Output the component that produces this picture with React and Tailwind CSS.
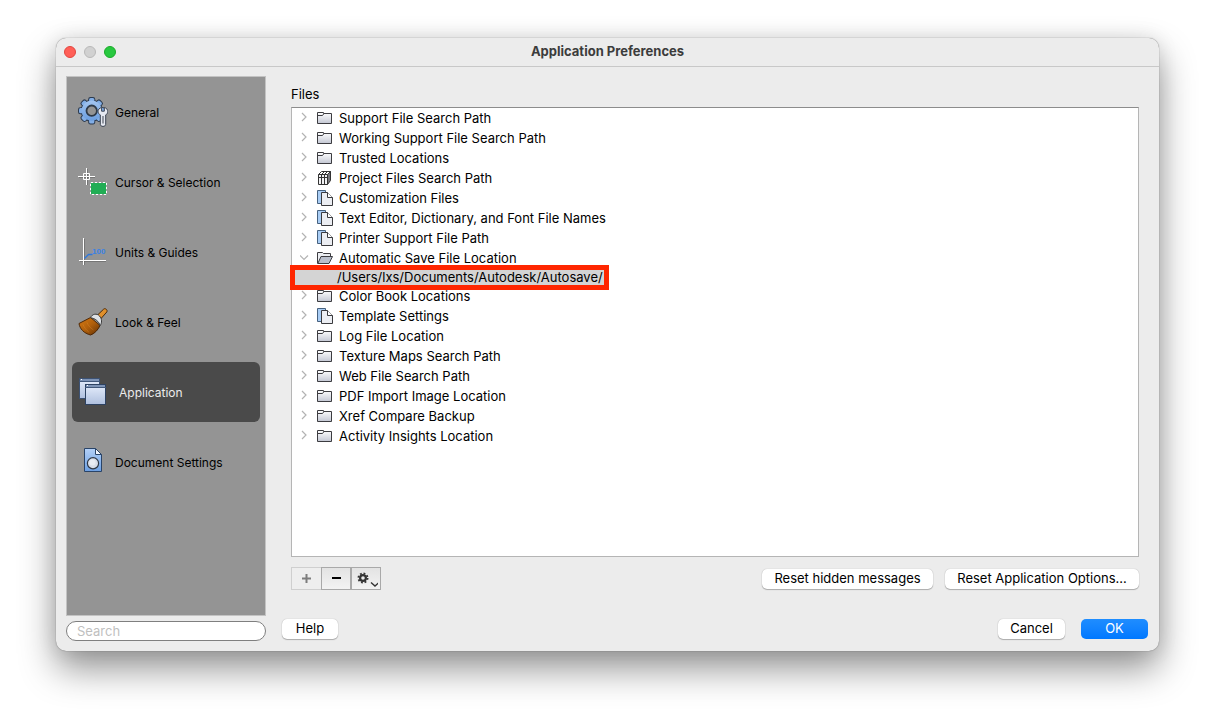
import React, { useState } from 'react';

const CATEGORIES = [
  { label: 'General', icon: GeneralIcon },
  { label: 'Cursor & Selection', icon: CursorIcon },
  { label: 'Units & Guides', icon: UnitsIcon },
  { label: 'Look & Feel', icon: BrushIcon },
  { label: 'Application', icon: WindowsIcon },
  { label: 'Document Settings', icon: DocumentIcon },
];

const FILES = [
  { label: 'Support File Search Path', icon: FolderIcon },
  { label: 'Working Support File Search Path', icon: FolderIcon },
  { label: 'Trusted Locations', icon: FolderIcon },
  { label: 'Project Files Search Path', icon: BinderIcon },
  { label: 'Customization Files', icon: PagesIcon },
  { label: 'Text Editor, Dictionary, and Font File Names', icon: PagesIcon },
  { label: 'Printer Support File Path', icon: PagesIcon },
  { label: 'Automatic Save File Location', icon: OpenFolderIcon, path: '/Users/lxs/Documents/Autodesk/Autosave/' },
  { label: 'Color Book Locations', icon: FolderIcon },
  { label: 'Template Settings', icon: PagesIcon },
  { label: 'Log File Location', icon: FolderIcon },
  { label: 'Texture Maps Search Path', icon: FolderIcon },
  { label: 'Web File Search Path', icon: FolderIcon },
  { label: 'PDF Import Image Location', icon: FolderIcon },
  { label: 'Xref Compare Backup', icon: FolderIcon },
  { label: 'Activity Insights Location', icon: FolderIcon },
];

/* Sidebar icons, 30x30 */

function GeneralIcon() {
  const teeth = [0, 45, 90, 135, 180, 225, 270, 315];
  return (
    <svg width="30" height="30" viewBox="0 0 30 30" className="shrink-0">
      <defs>
        <linearGradient id="gear" x1="0" y1="0" x2="0" y2="1">
          <stop offset="0" stopColor="#a3c5f0" />
          <stop offset="1" stopColor="#6a9ddf" />
        </linearGradient>
      </defs>
      <g fill="#2c3b50">
        <circle cx="13.7" cy="13.7" r="11" />
        {teeth.map(a => (
          <rect key={a} x="10.2" y="0" width="7" height="8" rx="2.2" transform={`rotate(${a} 13.7 13.7)`} />
        ))}
      </g>
      <g fill="#82aee6">
        {teeth.map(a => (
          <rect key={a} x="11.1" y="1" width="5.2" height="8" rx="1.5" transform={`rotate(${a} 13.7 13.7)`} />
        ))}
      </g>
      <circle cx="13.7" cy="13.7" r="10.1" fill="url(#gear)" />
      <circle cx="13.7" cy="13.7" r="5.2" fill="#949494" stroke="#2f3a48" strokeWidth="1.8" />
      <path
        d="M23.6 10.5c-2.4.5-3.7 2.300-3.500 4.300.2 1.500 1 2.500 2.200 3.100v9.400c0 2.800 5.400 2.800 5.400 0v-9.400c1.200-.6 2-1.700 2.100-3.100.1-2-1.200-3.800-3.500-4.300v3.700h-2.700z"
        fill="#e6e9f1" stroke="#3d4553" strokeWidth="1"
      />
      <path d="M25 19v7.5" stroke="#59606c" strokeWidth="1.2" />
    </svg>
  );
}

function CursorIcon() {
  return (
    <svg width="30" height="30" viewBox="0 0 30 30" fill="none" className="shrink-0">
      <path d="M1 10.5h16M9.5 2v16" stroke="#555" strokeOpacity=".5" />
      <path d="M0 9.5h17M8.5 1v17M5.5 6.5h6v6h-6z" stroke="#fff" />
      <rect x="12.5" y="15.5" width="16" height="12" fill="#22ad55" stroke="#3c4a40" />
      <rect x="12.5" y="15.5" width="16" height="12" stroke="#fff" strokeDasharray="3 1" />
    </svg>
  );
}

function UnitsIcon() {
  return (
    <svg width="30" height="30" viewBox="0 0 30 30" fill="none" className="shrink-0">
      <path d="M6.5 2v26M2 24.5h26" stroke="#555" strokeOpacity=".5" />
      <path d="M5.5 1v27M1 23.5h27" stroke="#fff" />
      <path d="M6.5 21.5l4-4h4" stroke="#2f78dc" strokeWidth="1.4" />
      <text x="14" y="17" fontSize="8" fontWeight="bold" fill="#3a82e6" fontFamily="Liberation Sans, sans-serif">100</text>
    </svg>
  );
}

function BrushIcon() {
  return (
    <svg width="30" height="30" viewBox="0 0 30 30" strokeLinejoin="round" className="shrink-0">
      <defs>
        <linearGradient id="bristle" x1="0" y1="0" x2="1" y2="1">
          <stop offset="0" stopColor="#d87b12" />
          <stop offset=".5" stopColor="#b05f0b" />
          <stop offset="1" stopColor="#5e2f05" />
        </linearGradient>
      </defs>
      <path d="M19 8.5L25.6 2.200c1.600-1.500 4.400.8 3.200 2.800L22.600 12z" fill="#e0902c" stroke="#4a2b0c" />
      <path d="M12.6 10.5L1 16.500c.6 5 5 10 11.600 11.500 4.500-1.600 8-6 9.400-9.600z" fill="url(#bristle)" stroke="#4d2706" />
      <path d="M5 17.500c1.200 3 3.200 5.600 5.800 7.500M9 15.500c1.200 3 3.500 5.600 6.500 7.500" stroke="#e8973a" strokeWidth=".8" fill="none" opacity=".4" />
      <path d="M12.500 10.800C14 6.800 19 6 21.500 9c2.600 2.800 2.600 7 .6 9.600-1.200-4.200-5-7.300-9.600-7.800z" fill="#dfe2e6" stroke="#3b3b3b" />
    </svg>
  );
}

function WindowsIcon() {
  return (
    <svg width="30" height="30" viewBox="0 0 30 30" className="shrink-0">
      <defs>
        <linearGradient id="pane" x1="0" y1="0" x2="0" y2="1">
          <stop offset="0" stopColor="#e6eefc" />
          <stop offset="1" stopColor="#afc0df" />
        </linearGradient>
      </defs>
      <rect x="1.5" y="1.5" width="20" height="20" fill="url(#pane)" stroke="#3d5273" />
      <rect x="2" y="2" width="19" height="2" fill="#7d93b6" />
      <path d="M1 4.5h21" stroke="#41587b" />
      <rect x="3" y="2" width="1" height="1" fill="#fff" />
      <rect x="7.5" y="7.5" width="20" height="20" fill="url(#pane)" stroke="#2d4262" />
      <rect x="8" y="8" width="19" height="2" fill="#7d93b6" />
      <path d="M7 10.5h21" stroke="#41587b" />
      <rect x="9" y="8" width="1" height="1" fill="#fff" />
    </svg>
  );
}

function DocumentIcon() {
  return (
    <svg width="30" height="30" viewBox="0 0 30 30" strokeLinejoin="round" className="shrink-0">
      <defs>
        <linearGradient id="doc" x1="0" y1="0" x2="0" y2="1">
          <stop offset="0" stopColor="#b4d1f8" />
          <stop offset="1" stopColor="#6c9fe2" />
        </linearGradient>
      </defs>
      <path d="M6.5 1.5h11l6 6v17h-17z" fill="url(#doc)" stroke="#2a4468" />
      <path d="M17.5 1.500v6h6z" fill="#f2f7ff" stroke="#2a4468" />
      <circle cx="15" cy="16.3" r="5.6" fill="#d9dee8" stroke="#2e3744" strokeWidth="1.200" />
      <circle cx="14.5" cy="15.5" r="3" fill="#e9ecf2" />
    </svg>
  );
}

/* Tree icons, 16x16 */

function FolderIcon() {
  return (
    <svg width="16" height="16" viewBox="0 0 16 16" className="shrink-0">
      <defs>
        <linearGradient id="folder" x1="0" y1="0" x2="0" y2="1">
          <stop offset="0" stopColor="#fff" />
          <stop offset="1" stopColor="#c3c7d3" />
        </linearGradient>
      </defs>
      <path d="M.5 2.5h6v1h8v10H.5z" fill="url(#folder)" stroke="#3c3c40" />
      <path d="M1 5.500h4.500l1.500-2" stroke="#3c3c40" fill="none" />
    </svg>
  );
}

function OpenFolderIcon() {
  return (
    <svg width="16" height="16" viewBox="0 0 16 16" strokeLinejoin="round" className="shrink-0">
      <path d="M.5 13.500v-11h5l1 1h7v3" fill="#eceef2" stroke="#3c3c40" />
      <path d="M.8 13.500l3.200-7h11.500l-3.500 7z" fill="#b9bfcc" stroke="#3c3c40" />
    </svg>
  );
}

function BinderIcon() {
  return (
    <svg width="16" height="16" viewBox="0 0 16 16" strokeLinejoin="round" className="shrink-0">
      <path d="M1.500 4.500l3-3h9l-3 3z" fill="#fff" stroke="#333" />
      <path d="M10.500 4.500l3-3v9l-3 4z" fill="#77777c" stroke="#333" />
      <path d="M1.500 4.500h9v10h-9z" fill="#f3f3f5" stroke="#333" />
      <path d="M4.500 4.500v10M7.500 4.500v10M4.500 4.500l3-3M7.500 4.500l3-3M1.500 7.500h9" stroke="#333" fill="none" />
    </svg>
  );
}

function PagesIcon() {
  return (
    <svg width="16" height="16" viewBox="0 0 16 16" className="shrink-0">
      <path d="M.5 .5h8v13h-8z" fill="#a9cdf5" stroke="#46617f" />
      <path d="M4.5 2.500h6l5 5v8h-11z" fill="#eceef3" stroke="#3a3a3e" />
      <path d="M10.500 2.500v5h5" fill="#fff" stroke="#3a3a3e" />
    </svg>
  );
}

function Chevron({ open }) {
  return (
    <svg width="10" height="10" viewBox="0 0 10 10" fill="none" stroke="#b3b3b3" strokeWidth="1.200" className="shrink-0 mb-0.5">
      {open ? <path d="M0 3.500l4 4 4-4" /> : <path d="M2 1l4 4-4 4" />}
    </svg>
  );
}

function GearMenuIcon() {
  return (
    <svg width="24" height="18" viewBox="0 0 24 18" fill="none">
      <circle cx="9" cy="8" r="2.900" stroke="#333" strokeWidth="2.200" />
      <circle cx="9" cy="8" r="4.600" stroke="#333" strokeWidth="1.800" strokeDasharray="1.800 1.810" />
      <path d="M17 12.500l4 3.500 4-3.500" stroke="#333" strokeWidth="1.400" />
    </svg>
  );
}

function PushButton({ className, children }) {
  return (
    <button
      type="button"
      className={`h-5 rounded-[5px] bg-white text-[13px] leading-4 pb-0.5 text-black shadow-[0_0_1px_rgba(0,0,0,0.3),0_1px_1px_rgba(0,0,0,0.25)] ${className}`}
    >
      {children}
    </button>
  );
}

export default function App() {
  const [active, setActive] = useState('Application');
  const [query, setQuery]   = useState('');

  return (
    <div className="min-h-screen bg-white px-14 pt-[38px] pb-[74px] flex flex-col font-['Inter',sans-serif] text-[13px] text-black">
      <div className="flex-1 flex flex-col rounded-[10px] bg-[#ececec] shadow-[0_0_1px_rgba(0,0,0,0.6),0_18px_36px_rgba(0,0,0,0.42),0_0_20px_rgba(0,0,0,0.1)]">

        {/* Title bar */}
        <header className="h-[29px] grid grid-cols-[1fr_auto_1fr] items-center px-2 border-b border-[#c8c8c8]">
          <div className="flex gap-2">
            <button type="button" aria-label="Close" className="w-3 h-3 rounded-full bg-[#ff5f57] border border-[#e2463f]" />
            <button type="button" aria-label="Minimize" className="w-3 h-3 rounded-full bg-[#d1d1d1] border border-[#b9b9b9]" />
            <button type="button" aria-label="Zoom" className="w-3 h-3 rounded-full bg-[#28c840] border border-[#1aab29]" />
          </div>
          <h1 className="font-bold text-[#3c3c3c]">Application Preferences</h1>
        </header>

        <div className="flex-1 flex pt-[9px] pl-[10px] pr-[11px] pb-[10px]">

          {/* Sidebar */}
          <aside className="w-[200px] shrink-0 flex flex-col gap-[5px]">
            <nav className="flex-1 flex flex-col gap-[10px] p-[5px] bg-[#949494] border border-[#c3c3c3]">
              {CATEGORIES.map(({ label, icon: Icon }) => (
                <button
                  key={label}
                  type="button"
                  onClick={() => setActive(label)}
                  className={`h-[60px] flex items-center pl-1.5 rounded-md text-[12px] text-left ${
                    active === label ? 'gap-[11px] bg-[#4a4a4a] text-[#ececec]' : 'gap-[7px] text-black'
                  }`}
                >
                  <Icon />
                  <span className="pt-0.5">{label}</span>
                </button>
              ))}
            </nav>
            <input
              type="search" aria-label="Search" placeholder="Search"
              value={query} onChange={e => setQuery(e.target.value)}
              className="h-5 w-full rounded-full bg-white border border-[#7f7f7f] px-[10px] text-[13px] outline-none placeholder:text-[#bfbfbf]"
            />
          </aside>

          {/* Files pane */}
          <main className="flex-1 flex flex-col ml-[15px]">
            <section className="flex-1 flex flex-col pl-[10px] pr-[9px]">
              <h2 className="mt-[10px] mb-[5px] leading-4">Files</h2>
              <ul className="flex-1 bg-white border border-[#b5b5b5] border-t-[#8c8c8c]">
                {FILES.map(({ label, icon: Icon, path }) => (
                  <li key={label}>
                    <div className="h-5 flex items-center pl-2">
                      <Chevron open={!!path} />
                      <span className="w-[29px] pl-[7px]"><Icon /></span>
                      <span className="pt-0.5">{label}</span>
                    </div>
                    {path && (
                      <div className="relative h-[18px] w-[315px] pl-[45px] leading-[18px] bg-[#d4d4d4]">
                        {path}
                        <span className="absolute -top-[3px] -bottom-1 -left-0.5 -right-0.5 border-[5px] border-[#ff2600]" />
                      </div>
                    )}
                  </li>
                ))}
              </ul>

              <div className="mt-[10px] flex items-center justify-between">
                <div className="flex h-[23px]">
                  <button type="button" disabled aria-label="Add" className="w-[30px] flex items-center justify-center border border-[#cfcfcf] border-r-0 bg-[#eeeeee]">
                    <svg width="9" height="9" viewBox="0 0 9 9"><path d="M4.500 0v9M0 4.500h9" stroke="#7d7d7d" strokeWidth="2" /></svg>
                  </button>
                  <button type="button" aria-label="Remove" className="w-[30px] flex items-center justify-center border border-[#a9a9a9] bg-linear-to-b from-[#e3e3e3] to-[#f3f3f3]">
                    <svg width="9" height="9" viewBox="0 0 9 9"><path d="M0 4h9" stroke="#000" strokeWidth="2" /></svg>
                  </button>
                  <button type="button" aria-label="Actions" className="w-[30px] flex items-center justify-center border border-[#a9a9a9] bg-linear-to-b from-[#e3e3e3] to-[#f3f3f3]">
                    <GearMenuIcon />
                  </button>
                </div>
                <div className="flex gap-3 pt-px">
                  <PushButton className="w-[171px]">Reset hidden messages</PushButton>
                  <PushButton className="w-[194px]">Reset Application Options...</PushButton>
                </div>
              </div>
            </section>

            <footer className="mt-[29px] mb-0.5 flex items-center justify-between">
              <PushButton className="w-14 ml-px">Help</PushButton>
              <div className="flex gap-4">
                <PushButton className="w-[67px]">Cancel</PushButton>
                <button type="button" className="w-[67px] h-5 rounded-[5px] bg-linear-to-b from-[#1f8dff] to-[#0078ff] text-[13px] leading-4 pb-0.5 text-white">
                  OK
                </button>
              </div>
            </footer>
          </main>
        </div>
      </div>
    </div>
  );
}
